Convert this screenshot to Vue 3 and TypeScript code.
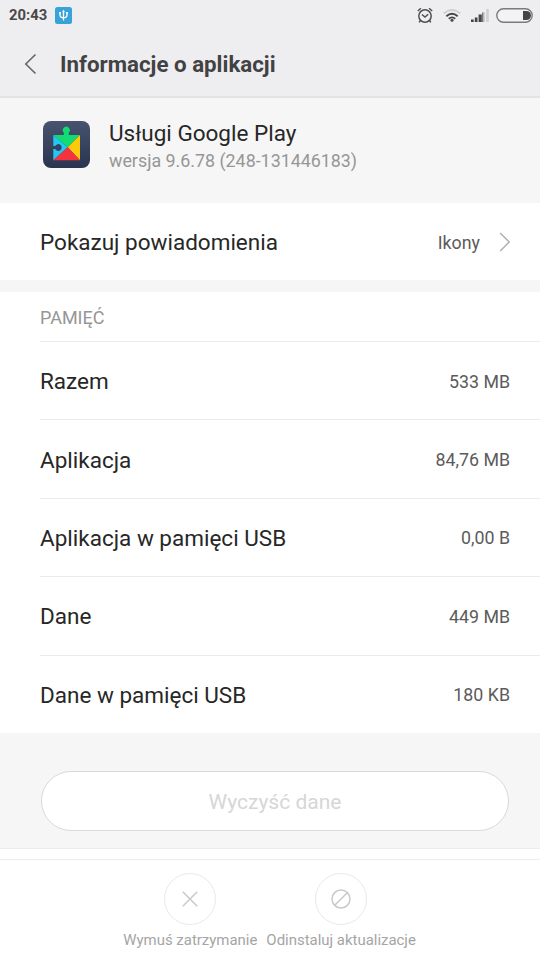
<script setup lang="ts">
interface StorageRow {
  label: string
  value: string
}

const storage: StorageRow[] = [
  { label: 'Razem', value: '533 MB' },
  { label: 'Aplikacja', value: '84,76 MB' },
  { label: 'Aplikacja w pamięci USB', value: '0,00 B' },
  { label: 'Dane', value: '449 MB' },
  { label: 'Dane w pamięci USB', value: '180 KB' },
]
</script>

<template>
  <main class="screen">
    <header class="top">
      <div class="status">
        <span class="clock">20:43</span>
        <svg class="usb" width="17" height="17" viewBox="0 0 17 17">
          <rect width="17" height="17" rx="2.5" fill="#37a3d8" />
          <g fill="none" stroke="#fff" stroke-width="1.3">
            <path d="M8.5 4.5V13.5M5 5.5V8Q5 10.7 8.5 10.7Q12 10.7 12 8V5.5" />
          </g>
          <path d="M8.5 2.7 10 5.2H7zM4 5h2v1.7H4zM11 5h2v1.7h-2z" fill="#fff" />
        </svg>
        <span class="spacer" />
        <svg class="alarm" width="16" height="17" viewBox="0 0 16 17" fill="none" stroke="#505052" stroke-width="1.5">
          <circle cx="8" cy="9" r="6.2" />
          <path d="M.8 4 3.9 1.3M15.2 4 12.1 1.3M3.4 13.5 2.2 15.4M12.6 13.5l1.2 1.9M4.9 7.5 8 10l3.2-2.7" />
        </svg>
        <svg class="wifi" width="18" height="13" viewBox="0 0 18 13" fill="none" stroke-width="1.8">
          <path d="M.7 4.5Q9-2.6 17.3 4.5" stroke="#d0d0d2" />
          <path d="M3.3 7.2Q9 2.2 14.7 7.2M5.8 9.8Q9 7 12.2 9.8" stroke="#454547" />
          <circle cx="9" cy="11.2" r="1.5" fill="#454547" />
        </svg>
        <svg class="signal" width="18" height="13" viewBox="0 0 18 13">
          <path d="M0 10.5h2.7V13H0zM3.8 8.5h2.7V13H3.8zM7.6 5.5h3.2V13H7.6z" fill="#454547" />
          <path d="M11.4 3.2h2.7V13h-2.7zM15.2 0h2.6v13h-2.6z" fill="#d0d0d2" />
          <path d="M11 3.4h1.3V13H11z" fill="#77777a" />
        </svg>
        <svg class="battery" width="37" height="15" viewBox="0 0 37 15">
          <rect x=".8" y=".8" width="35.4" height="13.4" rx="6.7" fill="#f3f3f4" stroke="#7b7b7d" stroke-width="1.4" />
          <path d="M27 3h3.5a4.5 4.5 0 0 1 0 9H27z" fill="#454547" />
        </svg>
      </div>
      <div class="titlebar">
        <svg class="back" width="13" height="22" viewBox="0 0 13 22" fill="none" stroke="#656567" stroke-width="1.6">
          <path d="M11.5 1.5 1.8 11l9.7 9.5" />
        </svg>
        <h1>Informacje o aplikacji</h1>
      </div>
    </header>

    <section class="app">
      <svg class="app-icon" width="47" height="47" viewBox="0 0 47 47">
        <defs>
          <linearGradient id="tile" x1="0" y1="0" x2="0" y2="1">
            <stop offset="0" stop-color="#48536f" />
            <stop offset="1" stop-color="#293451" />
          </linearGradient>
        </defs>
        <rect width="47" height="47" rx="8" fill="url(#tile)" />
        <path d="M10.3 14 24.7 26.2 10.3 39.3z" fill="#20c8f5" />
        <path d="M10.3 14H37L24.7 26.2z" fill="#10dc72" />
        <path d="M20.8 15v-3.4a3.5 3.5 0 1 1 5 0V15z" fill="#10dc72" />
        <path d="M37 14v25.3L24.7 26.2z" fill="#ffc80a" />
        <path d="M10.3 39.3 24.7 26.2 37 39.3z" fill="#f5333f" />
        <path d="M10 25h2.2a3.4 3.4 0 1 1 0 3H10z" fill="#36415f" />
      </svg>
      <div class="app-text">
        <h2>Usługi Google Play</h2>
        <p>wersja 9.6.78 (248-131446183)</p>
      </div>
    </section>

    <section class="notify">
      <span class="label">Pokazuj powiadomienia</span>
      <span class="value">Ikony</span>
      <svg class="chevron" width="12" height="20" viewBox="0 0 12 20" fill="none" stroke="#b0b0b0" stroke-width="1.5">
        <path d="M1.2 1 10.2 10l-9 9" />
      </svg>
    </section>

    <section class="storage">
      <h3>PAMIĘĆ</h3>
      <div v-for="row in storage" :key="row.label" class="row">
        <span class="label">{{ row.label }}</span>
        <span class="value">{{ row.value }}</span>
      </div>
    </section>

    <section class="clear">
      <button type="button" disabled>Wyczyść dane</button>
    </section>

    <footer class="actions">
      <div class="action stop">
        <span class="ring">
          <svg width="16" height="16" viewBox="0 0 16 16" fill="none" stroke="#c9c9c9" stroke-width="1.5">
            <path d="M.8.8 15.2 15.2M15.2.8.8 15.2" />
          </svg>
        </span>
        <span>Wymuś zatrzymanie</span>
      </div>
      <div class="action uninstall">
        <span class="ring">
          <svg width="20" height="20" viewBox="0 0 20 20" fill="none" stroke="#c9c9c9" stroke-width="1.5">
            <circle cx="10" cy="10" r="9" />
            <path d="M3.7 16.3 16.3 3.7" />
          </svg>
        </span>
        <span>Odinstaluj aktualizacje</span>
      </div>
    </footer>
  </main>
</template>

<style>
body {
  margin: 0;
}
</style>

<style scoped>
.screen {
  display: flex;
  flex-direction: column;
  width: 540px;
  height: 960px;
  overflow: hidden;
  background: #f6f6f6;
  color: #272727;
  font-family: Roboto, "Liberation Sans", sans-serif;
  white-space: nowrap;
}

h1, h2, h3, p {
  margin: 0;
  font-weight: 400;
}

svg {
  display: block;
  flex: none;
}

.top {
  box-sizing: border-box;
  height: 98px;
  border-bottom: 2px solid #e3e3e3;
  background: #eeeef0;
}

.status {
  display: flex;
  align-items: center;
  height: 30px;
  padding: 0 7px 0 9px;
}

.clock {
  color: #48484a;
  font-size: 14.8px;
  font-weight: 700;
}

.usb {
  margin-left: 8px;
}

.spacer {
  flex: 1;
}

.wifi {
  margin-left: 10px;
}

.signal {
  margin: 1px 0 0 10px;
}

.battery {
  margin-left: 7px;
}

.titlebar {
  display: flex;
  align-items: center;
  height: 68px;
  padding-left: 24px;
}

h1 {
  margin-left: 23px;
  color: #424244;
  font-size: 22.3px;
  font-weight: 700;
}

.app {
  display: flex;
  box-sizing: border-box;
  height: 105px;
  padding: 23px 0 0 43px;
}

.app-text {
  margin-left: 19px;
}

h2 {
  font-size: 22.5px;
  line-height: 24px;
}

.app-text p {
  margin-top: 5px;
  color: #969696;
  font-size: 17.85px;
  line-height: 22px;
}

.notify {
  display: flex;
  align-items: center;
  height: 77px;
  padding: 0 29px 0 40px;
  background: #fff;
}

.label {
  flex: 1;
  font-size: 22.5px;
}

.row .label {
  padding-top: 1px;
}

.value {
  padding-top: 1px;
  color: #5b5b5b;
  font-size: 17.8px;
}

.chevron {
  margin-left: 19px;
}

.storage {
  margin-top: 12px;
  padding-left: 40px;
  background: #fff;
}

h3 {
  height: 49px;
  color: #969696;
  font-size: 18px;
  line-height: 51px;
}

.row {
  display: flex;
  align-items: center;
  box-sizing: border-box;
  height: 78.4px;
  padding-right: 30px;
  border-top: 1px solid #ebebeb;
}

.clear {
  box-sizing: border-box;
  height: 116px;
  padding: 38px 31px 0 41px;
  border-bottom: 1px solid #ececec;
}

button {
  box-sizing: border-box;
  width: 100%;
  height: 60px;
  padding-top: 3px;
  border: 1px solid #d9d9d9;
  border-radius: 30px;
  background: #fff;
  color: #d6d6d6;
  font: inherit;
  font-size: 21px;
}

.actions {
  display: flex;
  flex: 1;
  gap: 9px;
  padding-left: 123.3px;
  border-top: 1px solid #ececec;
  box-shadow: 0 -10px #fff;
  margin-top: 10px;
  background: #fff;
  color: #a5a5a5;
  font-size: 14.95px;
}

.action {
  display: flex;
  flex-direction: column;
  align-items: center;
  padding-top: 13px;
}

.ring {
  display: grid;
  place-items: center;
  box-sizing: border-box;
  width: 52px;
  height: 52px;
  margin-bottom: 6px;
  border: 1px solid #e9e9e9;
  border-radius: 50%;
}
</style>
